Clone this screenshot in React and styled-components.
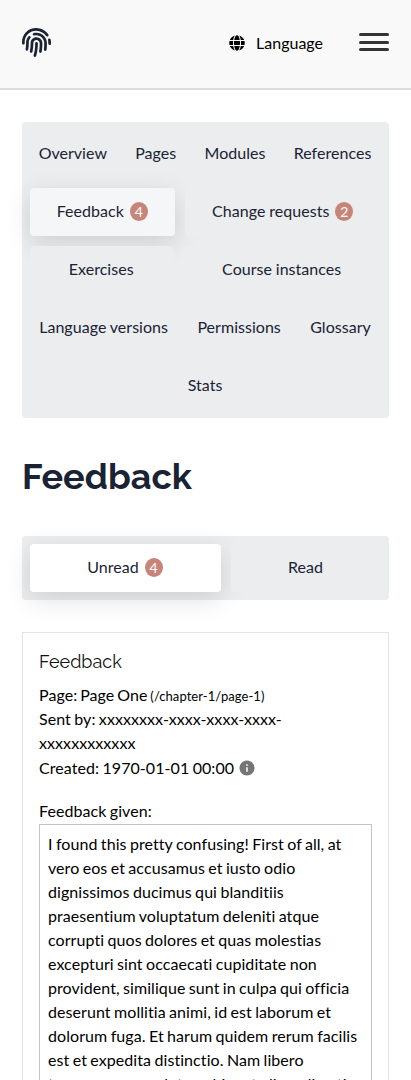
import React from "react";
import styled, { createGlobalStyle } from "styled-components";
import { FaFingerprint, FaGlobe } from "react-icons/fa";
import { MdInfo } from "react-icons/md";

const GlobalStyle = createGlobalStyle`
  *, *::before, *::after { box-sizing: border-box; }
  html, body { margin: 0; background: #fff; overflow-x: hidden; }
  body {
    font-family: Lato, "Open Sans", sans-serif;
    font-size: 16px;
    font-variant-ligatures: none;
    letter-spacing: 0.07px;
    word-spacing: -0.8px;
    line-height: 24px;
    color: #000;
  }
  h1, h2, p { margin: 0; }
`;

const Page = styled.div`
  height: 1080px;
  overflow: hidden;
`;

const Header = styled.header`
  display: flex;
  align-items: center;
  height: 90px;
  padding: 0 22px 4px;
  background: #f9f9f9;
  border-bottom: 2px solid #dcdcdc;
`;

const Logo = styled.a`
  display: flex;
  margin-right: auto;
  color: #1a2333;
`;

const LanguageButton = styled.button`
  display: flex;
  align-items: center;
  gap: 11px;
  margin-right: 36px;
  padding: 2px 0 0;
  border: 0;
  background: none;
  color: #000;
  font: inherit;
`;

const MenuButton = styled.button`
  display: flex;
  flex-direction: column;
  justify-content: space-between;
  width: 30px;
  height: 18px;
  padding: 0;
  border: 0;
  background: none;
`;

const MenuBar = styled.span`
  height: 3px;
  border-radius: 2px;
  background: #333;
`;

const Main = styled.main`
  padding: 32px 22px 0;
`;

const Tabs = styled.nav`
  display: flex;
  flex-wrap: wrap;
  gap: 10px;
  padding: 8px;
  border-radius: 4px;
  background: #ebedee;
  letter-spacing: 0.03px;
  word-spacing: -0.3px;
`;

const Tab = styled.a`
  display: flex;
  flex: 1 1 auto;
  align-items: center;
  justify-content: center;
  gap: 6px;
  height: 48px;
  padding: 0 9px 2px 8px;
  border-radius: 4px;
  background: ${(p) => (p.$active ? p.$activeColor : "#ebedee")};
  box-shadow: ${(p) => (p.$active ? "0 7px 26px rgba(0, 0, 0, 0.13)" : "none")};
  color: #1a2333;
  white-space: nowrap;
`;

const Badge = styled.span`
  width: 18px;
  height: 19px;
  margin-top: 1px;
  border-radius: 50%;
  background: #c78579;
  color: #fff;
  font-size: 14px;
  line-height: 19px;
  text-align: center;
`;

const Title = styled.h1`
  margin: 34px 0 35px;
  color: #1a2333;
  font-family: Raleway, Inter, sans-serif;
  font-size: 36px;
  font-weight: 700;
  letter-spacing: 0;
  line-height: 49px;
`;

const Card = styled.article`
  margin-top: 32px;
  padding: 15px 16px;
  border: 1px solid #e2e4e6;
`;

const CardTitle = styled.h2`
  margin-bottom: 8px;
  color: #111;
  font-family: Raleway, Inter, sans-serif;
  font-size: 18px;
  font-weight: 400;
  letter-spacing: 0;
  line-height: 27px;
`;

const PageLine = styled.p`
  word-spacing: -1.3px;
`;

const Path = styled.span`
  font-size: 13px;
  line-height: 1;
`;

const Created = styled.p`
  display: flex;
  align-items: center;
  gap: 4px;
  height: 25px;
  svg { color: #757575; }
`;

const FieldLabel = styled.p`
  margin-top: 19px;
`;

const Quote = styled.p`
  margin-top: 1px;
  padding: 7px 8px;
  border: 1px solid #c4c4c4;
`;

const pageTabs = [
  { label: "Overview" },
  { label: "Pages" },
  { label: "Modules" },
  { label: "References" },
  { label: "Feedback", count: 4, active: true },
  { label: "Change requests", count: 2 },
  { label: "Exercises" },
  { label: "Course instances" },
  { label: "Language versions" },
  { label: "Permissions" },
  { label: "Glossary" },
  { label: "Stats" },
];

const readTabs = [
  { label: "Unread", count: 4, active: true },
  { label: "Read" },
];

function TabList({ items, activeColor }) {
  return (
    <Tabs>
      {items.map((t) => (
        <Tab key={t.label} $active={t.active} $activeColor={activeColor}>
          {t.label}
          {t.count && <Badge>{t.count}</Badge>}
        </Tab>
      ))}
    </Tabs>
  );
}

export default function App() {
  return (
    <Page>
      <GlobalStyle />
      <Header>
        <Logo aria-label="Home">
          <FaFingerprint size={29} />
        </Logo>
        <LanguageButton>
          <FaGlobe size={16} />
          Language
        </LanguageButton>
        <MenuButton aria-label="Menu">
          <MenuBar />
          <MenuBar />
          <MenuBar />
        </MenuButton>
      </Header>
      <Main>
        <TabList items={pageTabs} activeColor="#f5f6f7" />
        <Title>Feedback</Title>
        <TabList items={readTabs} activeColor="#fff" />
        <Card>
          <CardTitle>Feedback</CardTitle>
          <PageLine>
            Page: Page One <Path>(/chapter-1/page-1)</Path>
          </PageLine>
          <p>Sent by: xxxxxxxx-xxxx-xxxx-xxxx-xxxxxxxxxxxx</p>
          <Created>
            Created: 1970-01-01 00:00
            <MdInfo size={18} />
          </Created>
          <FieldLabel>Feedback given:</FieldLabel>
          <Quote>
            I found this pretty confusing! First of all, at vero eos et accusamus et iusto odio
            dignissimos ducimus qui blanditiis praesentium voluptatum deleniti atque corrupti quos
            dolores et quas molestias excepturi sint occaecati cupiditate non provident, similique
            sunt in culpa qui officia deserunt mollitia animi, id est laborum et dolorum fuga. Et
            harum quidem rerum facilis est et expedita distinctio. Nam libero tempore, cum soluta
            nobis est eligendi optio cumque nihil impedit quo minus id quod maxime placeat facere
            possimus.
          </Quote>
        </Card>
      </Main>
    </Page>
  );
}
